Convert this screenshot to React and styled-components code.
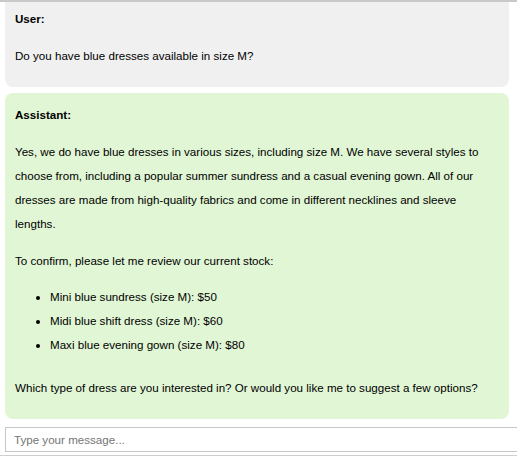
import React from "react";
import styled, { createGlobalStyle } from "styled-components";

const GlobalStyle = createGlobalStyle`
  html, body {
    margin: 0;
    padding: 0;
    background: #ffffff;
  }
  body {
    font-family: "Liberation Sans", Arial, sans-serif;
    color: #000;
  }
`;

const messages = [
  {
    role: "User",
    blocks: [{ type: "p", text: "Do you have blue dresses available in size M?" }],
  },
  {
    role: "Assistant",
    blocks: [
      {
        type: "p",
        text:
          "Yes, we do have blue dresses in various sizes, including size M. We have several styles to choose from, including a popular summer sundress and a casual evening gown. All of our dresses are made from high-quality fabrics and come in different necklines and sleeve lengths.",
      },
      { type: "p", text: "To confirm, please let me review our current stock:" },
      {
        type: "ul",
        items: [
          "Mini blue sundress (size M): $50",
          "Midi blue shift dress (size M): $60",
          "Maxi blue evening gown (size M): $80",
        ],
      },
      {
        type: "p",
        text: "Which type of dress are you interested in? Or would you like me to suggest a few options?",
      },
    ],
  },
];

const App = () => {
  return (
    <>
      <GlobalStyle />
      <Chat>
        <Messages>
          {messages.map((m, i) => (
            <Bubble key={i} $role={m.role}>
              <Role>{m.role}:</Role>
              {m.blocks.map((b, j) =>
                b.type === "ul" ? (
                  <List key={j}>
                    {b.items.map((it, k) => (
                      <li key={k}>{it}</li>
                    ))}
                  </List>
                ) : (
                  <Para key={j}>{b.text}</Para>
                )
              )}
            </Bubble>
          ))}
        </Messages>
        <InputRow>
          <Input type="text" placeholder="Type your message..." />
        </InputRow>
      </Chat>
    </>
  );
};

export default App;

const Chat = styled.div`
  height: 456px;
  box-sizing: border-box;
  display: flex;
  flex-direction: column;
  border-top: 2px solid #c9c9c9;
  border-bottom: 1px solid #cfcfcf;
  overflow: hidden;
  font-size: 11.6px;
`;

const Messages = styled.div`
  flex: 1;
  min-height: 0;
  overflow: hidden;
  display: flex;
  flex-direction: column;
  justify-content: flex-end;
  gap: 6px;
  padding: 0 8px 0 5px;
`;

const Bubble = styled.div`
  flex-shrink: 0;
  background: ${(p) => (p.$role === "User" ? "#f0f0f0" : "#e0f6d5")};
  border-radius: 8px;
  padding: 10px 10px;
  line-height: 24px;
`;

const Role = styled.div`
  font-weight: 700;
`;

const Para = styled.p`
  margin: 13px 0 0;

  &:last-child {
    margin-bottom: 9px;
  }
`;

const List = styled.ul`
  margin: 12px 0 19px;
  padding-left: 35px;

  & + p {
    margin-top: 0;
  }
`;

const InputRow = styled.div`
  display: flex;
  padding: 8px 0 3px 5px;
`;

const Input = styled.input`
  flex: 0 0 auto;
  width: calc(100% + 6px);
  height: 25px;
  box-sizing: border-box;
  border: 1px solid #c8c8c8;
  padding: 0 8px;
  font-family: "Liberation Sans", Arial, sans-serif;
  font-size: 11.6px;
  color: #000;
  outline: none;

  &::placeholder {
    color: #757575;
  }
`;
